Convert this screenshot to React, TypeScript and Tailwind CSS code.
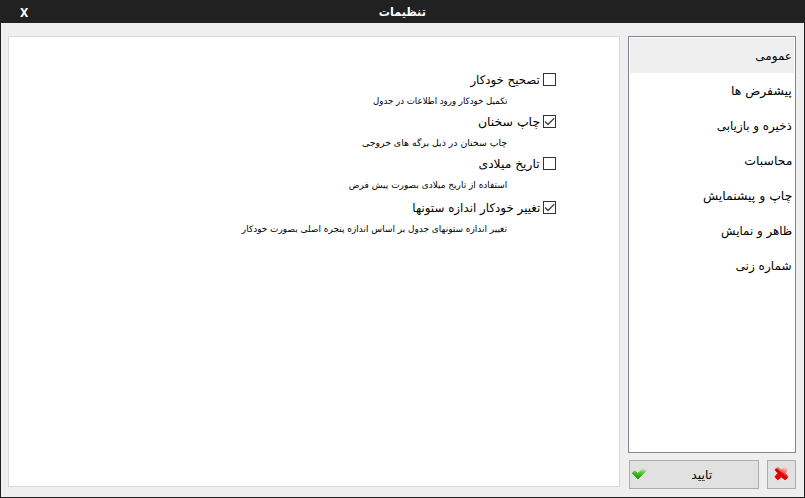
const sections = [
  { label: 'عمومی', fit: '' },
  { label: 'پیشفرض ها', fit: 'scale-x-[1.035]' },
  { label: 'ذخیره و بازیابی', fit: 'scale-x-[0.99]' },
  { label: 'محاسبات', fit: 'scale-x-[1.035]' },
  { label: 'چاپ و پیشنمایش', fit: 'scale-x-[1.035]' },
  { label: 'ظاهر و نمایش', fit: 'scale-x-[0.985]' },
  { label: 'شماره زنی', fit: 'scale-x-[1.01]' },
];

const options = [
  { label: 'تصحیح خودکار', hint: 'تکمیل خودکار ورود اطلاعات در جدول', checked: false, row: 'h-[42px]', fit: 'scale-x-[0.98]', hintFit: 'scale-x-[0.957]' },
  { label: 'چاپ سخنان', hint: 'چاپ سخنان در ذیل برگه های خروجی', checked: true, row: 'h-[42px]', fit: 'scale-x-[1.035]', hintFit: 'scale-x-[1.036]' },
  { label: 'تاریخ میلادی', hint: 'استفاده از تاریخ میلادی بصورت پیش فرض', checked: false, row: 'h-[44px]', fit: 'scale-x-[1.025]', hintFit: 'scale-x-[0.995]' },
  { label: 'تغییر خودکار اندازه ستونها', hint: 'تغییر اندازه ستونهای جدول بر اساس اندازه پنجره اصلی بصورت خودکار', checked: true, row: 'h-[42px]', fit: 'scale-x-[0.99]', hintFit: 'scale-x-[0.993]' },
];

function CheckIcon() {
  return (
    <svg className="h-[15px] w-4" viewBox="0 0 16 15">
      <defs>
        <linearGradient id="tick" x1="0.7" y1="0" x2="0.45" y2="0.9">
          <stop offset="0" stopColor="#c0e8b5" />
          <stop offset="0.4" stopColor="#56c838" />
          <stop offset="1" stopColor="#249a0c" />
        </linearGradient>
      </defs>
      <path d="M1.2 6.2 3.8 3.8 6.6 6.6 12.2 1.6 15 3.8 7 12Z" fill="url(#tick)" stroke="url(#tick)" strokeWidth="1" strokeLinejoin="round" />
    </svg>
  );
}

function CrossIcon() {
  return (
    <svg className="mb-[2px] h-[15px] w-[15px]" viewBox="0 0 15 15">
      <defs>
        <linearGradient id="cross" x1="0.75" y1="0.05" x2="0.45" y2="0.65">
          <stop offset="0" stopColor="#ffc4c4" />
          <stop offset="0.5" stopColor="#f56464" />
          <stop offset="1" stopColor="#e20a0a" />
        </linearGradient>
      </defs>
      <path d="M0.9 3.6 4.2 1.1 7.4 3.8 10.8 1.1 13.7 3.6 11.3 7.2 14 10.8 11 13.8 7.3 11 3.8 13.8 0.9 11 3.8 7.2Z" fill="url(#cross)" stroke="url(#cross)" strokeWidth="1" strokeLinejoin="round" />
      <path d="M2.6 4 12 11.8M3.2 11.5 6.8 8" stroke="#e00000" strokeWidth="2.8" strokeLinecap="round" />
    </svg>
  );
}

export default function App() {
  return (
    <div dir="rtl" className="flex h-[498px] w-[805px] flex-col overflow-hidden border border-t-0 border-[#212121] bg-[#efefef] font-['DejaVu_Sans',sans-serif] text-[12px] leading-none whitespace-nowrap text-black">
      <header className="grid h-[23px] shrink-0 grid-cols-[1fr_auto_1fr] items-center bg-[#212121] font-bold text-white">
        <span />
        <h1 className="scale-x-[0.93] pt-px">تنظیمات</h1>
        <button className="justify-self-end pt-[2px] pl-[19px] font-['DejaVu_Sans_Condensed','DejaVu_Sans',sans-serif] text-[12px]">X</button>
      </header>
      <div className="flex min-h-0 flex-1 gap-2 pt-[13px] pr-2 pl-[7px]">
        <aside className="flex w-[168px] flex-col gap-[7px]">
          <nav className="flex h-[417px] flex-col border border-[#828790] bg-white p-px">
            {sections.map((s, i) => (
              <a key={s.label} className={'flex h-[35px] shrink-0 items-center pt-px pr-[2px] ' + (i === 0 ? 'bg-[#efefef]' : '')}>
                <span className={'origin-right ' + s.fit}>{s.label}</span>
              </a>
            ))}
          </nav>
          <div className="flex gap-2">
            <button className="flex h-[29px] w-[29px] items-center justify-center border border-[#adadad] bg-[#e1e1e1]"><CrossIcon /></button>
            <button className="flex h-[29px] w-[130px] items-center justify-between border border-[#adadad] bg-[#e1e1e1] pr-[46px] pl-px">
              <span className="origin-right scale-x-[1.04] pt-px">تایید</span>
              <CheckIcon />
            </button>
          </div>
        </aside>
        <main className="h-[451px] w-[612px] border border-[#d9d9d9] bg-white pt-[36px] pr-[63px]">
          {options.map((o) => (
            <section key={o.label} className={o.row}>
              <label className="flex h-[13px] items-center gap-[3px]">
                <span className="flex h-[13px] w-[13px] shrink-0 border border-[#333] bg-white">
                  {o.checked && (
                    <svg className="h-[11px] w-[11px]" viewBox="0 0 11 11"><path d="M1 5.4 4 8.4 10.2 2.2" fill="none" stroke="#444" strokeWidth="1.4" /></svg>
                  )}
                </span>
                <span className={'origin-right ' + o.fit}>{o.label}</span>
              </label>
              <p className="flex pt-[11px] pr-[49px] text-[9px]">
                <span className={'origin-right ' + o.hintFit}>{o.hint}</span>
              </p>
            </section>
          ))}
        </main>
      </div>
    </div>
  );
}
